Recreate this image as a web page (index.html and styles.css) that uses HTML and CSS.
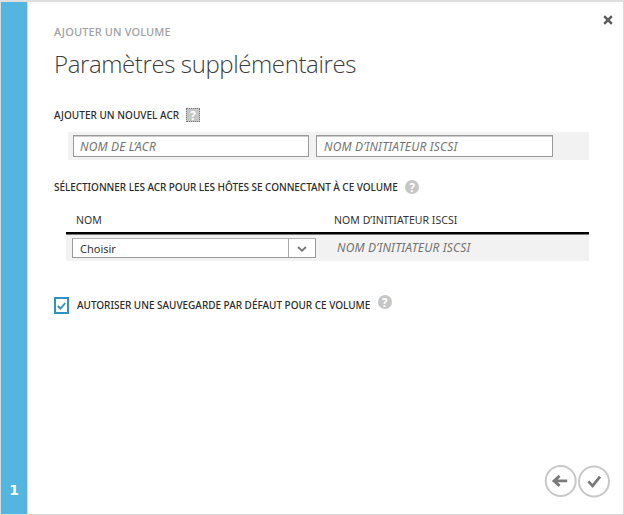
FILE: index.html
```html
<!DOCTYPE html>
<html lang="fr">
<head>
<meta charset="utf-8">
<title>Ajouter un volume</title>
<link rel="stylesheet" href="styles.css">
</head>
<body>
<div class="dialog">
  <aside class="steps"><span>1</span></aside>
  <main class="content">
    <button class="close" aria-label="Fermer"><svg width="10" height="10" viewBox="0 0 10 10"><path d="M1.2 1.2 8.8 8.8M8.8 1.2 1.2 8.8"/></svg></button>
    <div class="subtitle"><span>AJOUTER UN VOLUME</span></div>
    <h1><span>Paramètres supplémentaires</span></h1>

    <h2 class="label new-acr"><span>AJOUTER UN NOUVEL ACR</span><i class="help focused">?</i></h2>
    <div class="new-row">
      <div class="input"><span class="ph-name">NOM DE L’ACR</span></div>
      <div class="input"><span class="ph-init">NOM D’INITIATEUR ISCSI</span></div>
    </div>

    <h2 class="label select-acr"><span>SÉLECTIONNER LES ACR POUR LES HÔTES SE CONNECTANT À CE VOLUME</span><i class="help">?</i></h2>
    <div class="table">
      <div class="thead"><span class="th-name">NOM</span><span class="th-init">NOM D’INITIATEUR ISCSI</span></div>
      <div class="trow">
        <div class="select"><span class="value">Choisir</span><span class="arrow"><svg width="10" height="6" viewBox="0 0 10 6"><path d="M1 1 5 4.7 9 1"/></svg></span></div>
        <span class="ph-init">NOM D’INITIATEUR ISCSI</span>
      </div>
    </div>

    <div class="label backup">
      <span class="check"><svg width="9" height="8" viewBox="0 0 9 8"><path d="M.8 4 3.5 6.7 8.3 1"/></svg></span>
      <span class="backup-text">AUTORISER UNE SAUVEGARDE PAR DÉFAUT POUR CE VOLUME</span><i class="help">?</i>
    </div>

    <div class="nav">
      <svg width="33" height="33" viewBox="0 0 33 33"><circle cx="16.7" cy="16" r="15"/><path class="glyph" d="M23.2 15.9H10.4M15.6 10.9 10 15.9 15.6 20.9"/></svg>
      <svg width="33" height="33" viewBox="0 0 33 33"><circle cx="17" cy="16.5" r="15"/><path class="glyph" d="M11.3 16.4 15.6 20.9 23 11.7"/></svg>
    </div>
  </main>
</div>
</body>
</html>
```

FILE: styles.css
```css
* { box-sizing: border-box; }
body { margin: 0; font-family: "Noto Sans", "Open Sans", sans-serif; color: #333; background: #fff; }
.dialog { display: flex; width: 624px; height: 515px; border: 1px solid #dadada; border-top: 2px solid #dfdfdf; position: relative; }
.steps { width: 27px; background: #53b5e0; border-right: 1px solid #d5dde0; color: #fff; font-family: "DejaVu Sans", sans-serif; font-weight: 700; font-size: 14px; line-height: 16px; display: flex; flex-direction: column; justify-content: flex-end; align-items: center; padding-bottom: 16px; }
.content { flex: 1; display: flex; flex-direction: column; padding-left: 26px; }
.close { position: absolute; right: 10px; top: 13px; width: 10px; height: 10px; padding: 0; border: 0; background: none; display: block; }
.close svg { display: block; fill: none; stroke: #5b5b5b; stroke-width: 2.5; }
span { white-space: nowrap; }
.subtitle { margin-top: 22px; height: 16px; line-height: 16px; font-size: 11px; font-weight: 500; color: #a0a0a0; letter-spacing: .12px; }
h1 { margin: 6px 0 0; height: 36px; line-height: 36px; font-family: "Open Sans", sans-serif; font-size: 24px; font-weight: 300; color: #3c3c3c; letter-spacing: -.39px; }
.label { margin: 0; display: flex; height: 16px; line-height: 16px; font-size: 10px; font-weight: 500; color: #2b2b2b; }
.new-acr { margin-top: 25px; }
.new-acr span { letter-spacing: .02px; }
.help { flex: none; width: 14px; height: 14px; border-radius: 50%; background: #c6c6c6; color: #fff; font-size: 11.5px; font-weight: 700; line-height: 15px; text-align: center; font-style: normal; margin: 0 0 0 7.5px; }
.help.focused { border-radius: 0; outline: 1px dotted #777; outline-offset: -1px; margin: 1px 0 0 7px; }
.new-row { margin: 9px 0 0 14px; width: 521px; height: 28px; background: #f2f2f2; display: flex; gap: 7px; padding: 3px 0 0 5px; }
.input { width: 236px; height: 22px; border: 1px solid #999; box-shadow: inset 0 1px #ccc; background: #fff; padding-left: 6px; line-height: 18px; }
.input + .input { width: 237px; margin-left: 0; padding-left: 7px; }
.ph-name, .ph-init { font-size: 12px; font-style: italic; font-weight: 400; color: #737373; letter-spacing: .16px; }
.select-acr { margin-top: 19px; }
.select-acr span { letter-spacing: -.055px; }
.select-acr .help { margin-top: 1px; }
.table { margin: 17px 0 0 12px; width: 523px; }
.thead { height: 22px; display: flex; border-bottom: 2px solid #000; font-size: 10.5px; line-height: 16px; padding-left: 10px; letter-spacing: .05px; }
.th-name { width: 258px; }
.trow { background: #f2f2f2; height: 27px; display: flex; border-top: 1px solid #777; padding: 3px 0 0 6px; }
.select { width: 244px; height: 20px; border: 1px solid #999; border-top-color: #b5b5b5; background: #fff; display: flex; justify-content: space-between; line-height: 19px; font-size: 11px; padding-left: 7px; margin-right: 21px; }
.arrow { width: 27px; border-left: 1px solid #aaa; display: flex; align-items: center; justify-content: center; }
.arrow svg { fill: none; stroke: #777; stroke-width: 1.8; margin-top: 2px; }
.trow .ph-init { line-height: 19px; }
.backup { margin-top: 36px; height: 17px; line-height: 17px; }
.backup-text { letter-spacing: -.02px; }
.check { width: 15px; height: 17px; border: 2px solid #3191c4; display: flex; align-items: center; justify-content: center; margin-right: 8px; }
.check svg { fill: none; stroke: #3191c4; stroke-width: 1.8; }
.backup .help { margin-top: -2px; }
.nav { margin-top: auto; display: flex; align-self: flex-end; gap: 0; padding: 0 13px 16px 0; }
.nav svg { fill: none; stroke: #c8c8c8; stroke-width: 2; }
.nav .glyph { stroke: #7a7a7a; stroke-width: 2.8; }
```
